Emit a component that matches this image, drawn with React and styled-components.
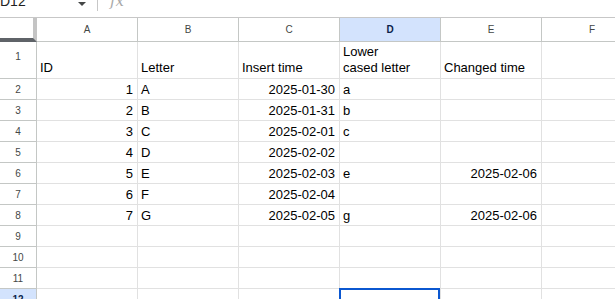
import React from 'react'
import styled, { createGlobalStyle } from 'styled-components'

const GlobalStyle = createGlobalStyle`
    html, body {
        margin: 0;
        padding: 0;
        background: #ffffff;
        overflow: hidden;
    }
    body {
        font-family: "Liberation Sans", Arial, sans-serif;
    }
`

const columns = ['A', 'B', 'C', 'D', 'E', 'F']
const selectedCol = 'D'
const selectedRow = 12

const rows = [
    { id: '1', letter: 'A', inserted: '2025-01-30', lower: 'a', changed: '' },
    { id: '2', letter: 'B', inserted: '2025-01-31', lower: 'b', changed: '' },
    { id: '3', letter: 'C', inserted: '2025-02-01', lower: 'c', changed: '' },
    { id: '4', letter: 'D', inserted: '2025-02-02', lower: '', changed: '' },
    { id: '5', letter: 'E', inserted: '2025-02-03', lower: 'e', changed: '2025-02-06' },
    { id: '6', letter: 'F', inserted: '2025-02-04', lower: '', changed: '' },
    { id: '7', letter: 'G', inserted: '2025-02-05', lower: 'g', changed: '2025-02-06' },
]

const App = () => {
    const emptyRows = [9, 10, 11, 12]

    return (
        <>
            <GlobalStyle />
            <Page>
                <FormulaBar>
                    <NameBox>
                        <span>D12</span>
                        <Caret />
                    </NameBox>
                    <Divider />
                    <Fx>fx</Fx>
                </FormulaBar>

                <Grid>
                    <Corner />
                    {columns.map(c => (
                        <ColHeader key={c} active={c === selectedCol}>{c}</ColHeader>
                    ))}

                    <RowHeader tall>1</RowHeader>
                    <Cell tall>ID</Cell>
                    <Cell tall>Letter</Cell>
                    <Cell tall>Insert time</Cell>
                    <Cell tall>Lower<br />cased letter</Cell>
                    <Cell tall>Changed time</Cell>
                    <Cell tall />

                    {rows.map((r, i) => (
                        <React.Fragment key={r.id}>
                            <RowHeader>{i + 2}</RowHeader>
                            <Cell right>{r.id}</Cell>
                            <Cell>{r.letter}</Cell>
                            <Cell right>{r.inserted}</Cell>
                            <Cell>{r.lower}</Cell>
                            <Cell right>{r.changed}</Cell>
                            <Cell />
                        </React.Fragment>
                    ))}

                    {emptyRows.map(n => (
                        <React.Fragment key={n}>
                            <RowHeader active={n === selectedRow}>{n}</RowHeader>
                            {columns.map(c => (
                                <Cell key={c} selected={n === selectedRow && c === selectedCol} />
                            ))}
                        </React.Fragment>
                    ))}
                </Grid>
            </Page>
        </>
    )
}

const Page = styled.div`
    width: 615px;
    height: 299px;
    overflow: hidden;
    background: #ffffff;
`

const FormulaBar = styled.div`
    height: 17px;
    border-bottom: 1px solid #c7c7c7;
    display: flex;
    align-items: flex-start;
    overflow: hidden;
`

const NameBox = styled.div`
    width: 96px;
    display: flex;
    align-items: flex-start;
    justify-content: space-between;
    padding: 0 10px 0 0;
    box-sizing: border-box;
    margin-top: -9px;
    font-size: 14px;
    line-height: 20px;
    color: #1f1f1f;
`

const Caret = styled.div`
    width: 0;
    height: 0;
    margin-top: 11px;
    border-left: 4px solid transparent;
    border-right: 4px solid transparent;
    border-top: 4px solid #444746;
`

const Divider = styled.div`
    width: 1px;
    height: 11px;
    background: #c7c7c7;
    margin-left: 1px;
`

const Fx = styled.div`
    margin: -9px 0 0 12px;
    font-family: "DejaVu Serif", "Liberation Serif", serif;
    font-style: italic;
    font-size: 15px;
    line-height: 20px;
    color: #a8a8a8;
`

const Grid = styled.div`
    display: grid;
    grid-template-columns: 37px repeat(6, 101px);
    grid-template-rows: 24px 37px repeat(11, 21px);
`

const Corner = styled.div`
    position: relative;
    border-right: 4px solid #c4c4c4;
    border-bottom: 4px solid #5f6368;
    margin-right: 0;
    box-sizing: border-box;
    background: #ffffff;
    height: 24px;
`

const ColHeader = styled.div`
    box-sizing: border-box;
    border-right: 1px solid #c4c7c5;
    border-bottom: 1px solid #c4c7c5;
    background: ${p => (p.active ? '#d3e3fd' : '#ffffff')};
    color: ${p => (p.active ? '#0b1f4a' : '#444746')};
    font-weight: ${p => (p.active ? 700 : 400)};
    font-size: 10px;
    display: flex;
    align-items: center;
    justify-content: center;
`

const RowHeader = styled.div`
    box-sizing: border-box;
    border-right: 1px solid #c4c7c5;
    border-bottom: 1px solid #c4c7c5;
    background: ${p => (p.active ? '#d3e3fd' : '#ffffff')};
    color: ${p => (p.active ? '#0b1f4a' : '#444746')};
    font-weight: ${p => (p.active ? 700 : 400)};
    font-size: 10px;
    display: flex;
    align-items: center;
    justify-content: center;
    padding-bottom: ${p => (p.tall ? '8px' : '0')};
`

const Cell = styled.div`
    box-sizing: border-box;
    border-right: 1px solid #e1e1e1;
    border-bottom: 1px solid #e1e1e1;
    font-size: 13px;
    line-height: 16px;
    color: #000000;
    padding: 0 ${p => (p.right ? '4px' : '3px')} ${p => (p.tall ? '2px' : '1px')};
    display: flex;
    align-items: flex-end;
    justify-content: ${p => (p.right ? 'flex-end' : 'flex-start')};
    white-space: nowrap;
    overflow: hidden;
    ${p => p.tall && 'display: block; align-content: end;'}
    ${p => p.selected && 'box-shadow: inset 0 0 0 2px #0b57d0; margin: -1px 0 0 -1px;'}
`

export default App
